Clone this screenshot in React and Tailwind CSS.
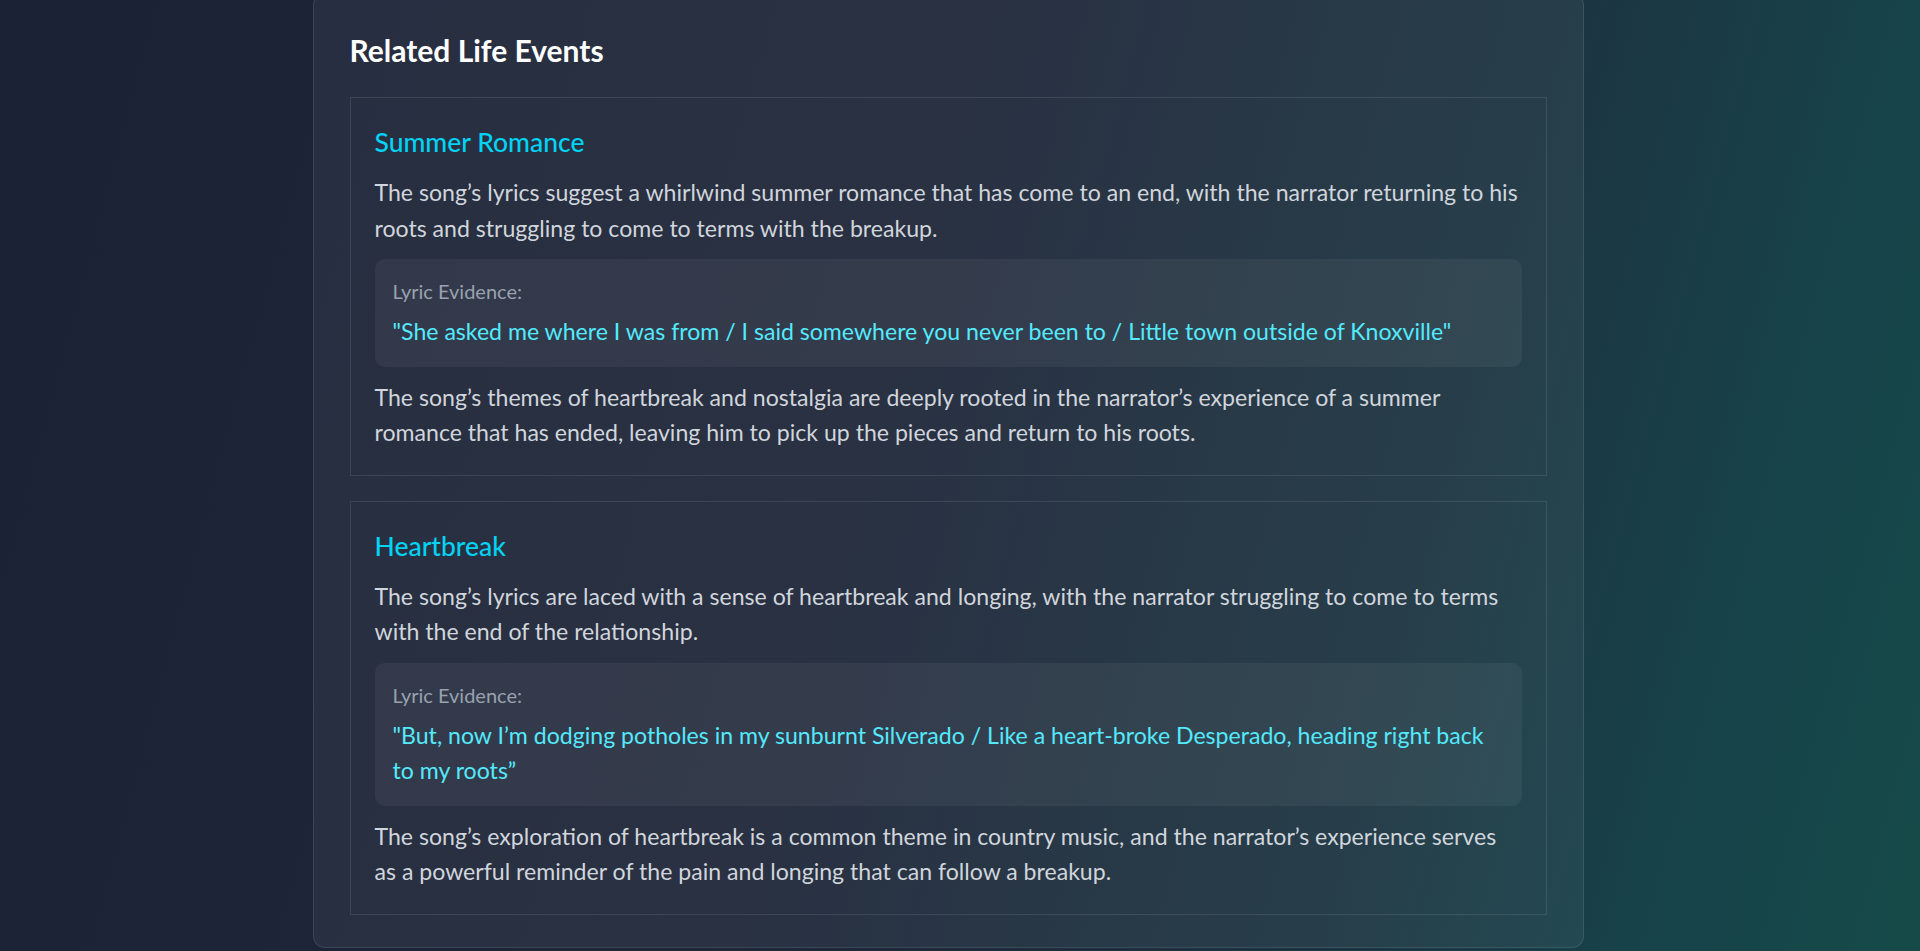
import React from 'react';

const events = [
  {
    title: 'Summer Romance',
    summary:
      "The song\u2019s lyrics suggest a whirlwind summer romance that has come to an end, with the narrator returning to his roots and struggling to come to terms with the breakup.",
    evidence:
      '"She asked me where I was from / I said somewhere you never been to / Little town outside of Knoxville"',
    note:
      "The song\u2019s themes of heartbreak and nostalgia are deeply rooted in the narrator\u2019s experience of a summer romance that has ended, leaving him to pick up the pieces and return to his roots.",
  },
  {
    title: 'Heartbreak',
    summary:
      "The song\u2019s lyrics are laced with a sense of heartbreak and longing, with the narrator struggling to come to terms with the end of the relationship.",
    evidence:
      '"But, now I\u2019m dodging potholes in my sunburnt Silverado / Like a heart-broke Desperado, heading right back to my roots\u201d',
    note:
      "The song\u2019s exploration of heartbreak is a common theme in country music, and the narrator\u2019s experience serves as a powerful reminder of the pain and longing that can follow a breakup.",
  },
];

function EventCard({ event }) {
  return (
    <div className="border border-white/10 px-6 pt-[27px] pb-6">
      <h3 className="text-[26.5px] leading-[35px] font-medium text-cyan-400 mb-[15px]">{event.title}</h3>
      <p className="text-[23.1px] leading-[35.5px] text-gray-300">{event.summary}</p>
      <div className="my-[13px] rounded-[10px] bg-white/5 px-[18px] pt-5 pb-[17px]">
        <p className="text-[20px] leading-[25px] text-gray-400">Lyric Evidence:</p>
        <p className="mt-[10px] text-[23.1px] leading-[35.5px] text-cyan-300">{event.evidence}</p>
      </div>
      <p className="text-[23.1px] leading-[35.5px] text-gray-300">{event.note}</p>
    </div>
  );
}

export default function App() {
  return (
    <div className="h-screen overflow-y-scroll pr-[15px] bg-[linear-gradient(105deg,#1b2236_0%,#1e2638_45%,#1c3441_72%,#17434a_88%,#154a48_100%)] font-['Lato','Noto_Sans',sans-serif]">
      <div className="mx-auto w-[1280px] pb-[3160px]">
        <section className="-mt-[7px] w-[1271px] rounded-xl border border-white/10 bg-white/5 px-9 pt-9 pb-8">
          <h2 className="text-[30px] leading-[40px] font-bold text-white mb-[27px]">Related Life Events</h2>
          <div className="flex flex-col gap-[25px]">
            {events.map((e) => (
              <EventCard key={e.title} event={e} />
            ))}
          </div>
        </section>
      </div>
    </div>
  );
}
